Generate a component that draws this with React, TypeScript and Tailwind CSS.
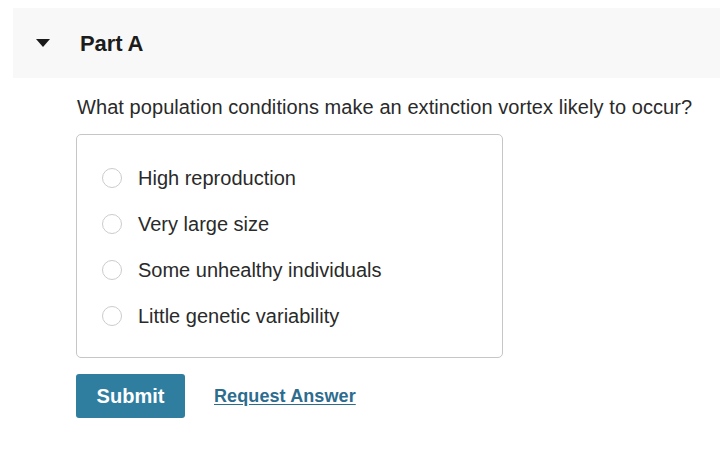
const options = [
  "High reproduction",
  "Very large size",
  "Some unhealthy individuals",
  "Little genetic variability",
];

export default function App() {
  return (
    <div className="w-[720px] h-[466px] bg-white font-['Liberation_Sans',Arial,sans-serif] text-[#222]">
      <div className="pt-[8px] pl-[13px]">
        <div className="h-[70px] bg-[#f8f8f8] flex items-center">
          <svg width="14" height="8" viewBox="0 0 14 8" className="ml-[23px]">
            <path d="M0 0 L14 0 L7 8 Z" fill="#1a1a1a" />
          </svg>
          <span className="ml-[30px] text-[22px] font-bold tracking-[-0.1px] text-[#1c1c1c]">Part A</span>
        </div>
      </div>

      <div className="pl-[77px] pt-[17px]">
        <p className="text-[20px] leading-[24px] tracking-[0.07px] text-[#2a2a2a]">
          What population conditions make an extinction vortex likely to occur?
        </p>

        <div className="mt-[15px] -ml-[1px] w-[427px] h-[224px] border border-[#c6c6c6] rounded-[5px] pt-[31px] pl-[25px]">
          <div className="flex flex-col gap-[22px]">
            {options.map((label) => (
              <label key={label} className="flex items-center h-[24px]">
                <span className="w-[20px] h-[20px] rounded-full border border-[#cccccc] bg-white" />
                <span className="ml-[16px] text-[20px] text-[#2a2a2a]">{label}</span>
              </label>
            ))}
          </div>
        </div>

        <div className="mt-[16px] -ml-[1px] flex items-center">
          <button className="w-[109px] h-[44px] bg-[#2f7ea0] rounded-[3px] text-white text-[20px] font-bold">
            Submit
          </button>
          <a className="ml-[29px] text-[18px] font-bold tracking-[0.1px] text-[#2c6c8e] underline underline-offset-2">
            Request Answer
          </a>
        </div>
      </div>
    </div>
  );
}
